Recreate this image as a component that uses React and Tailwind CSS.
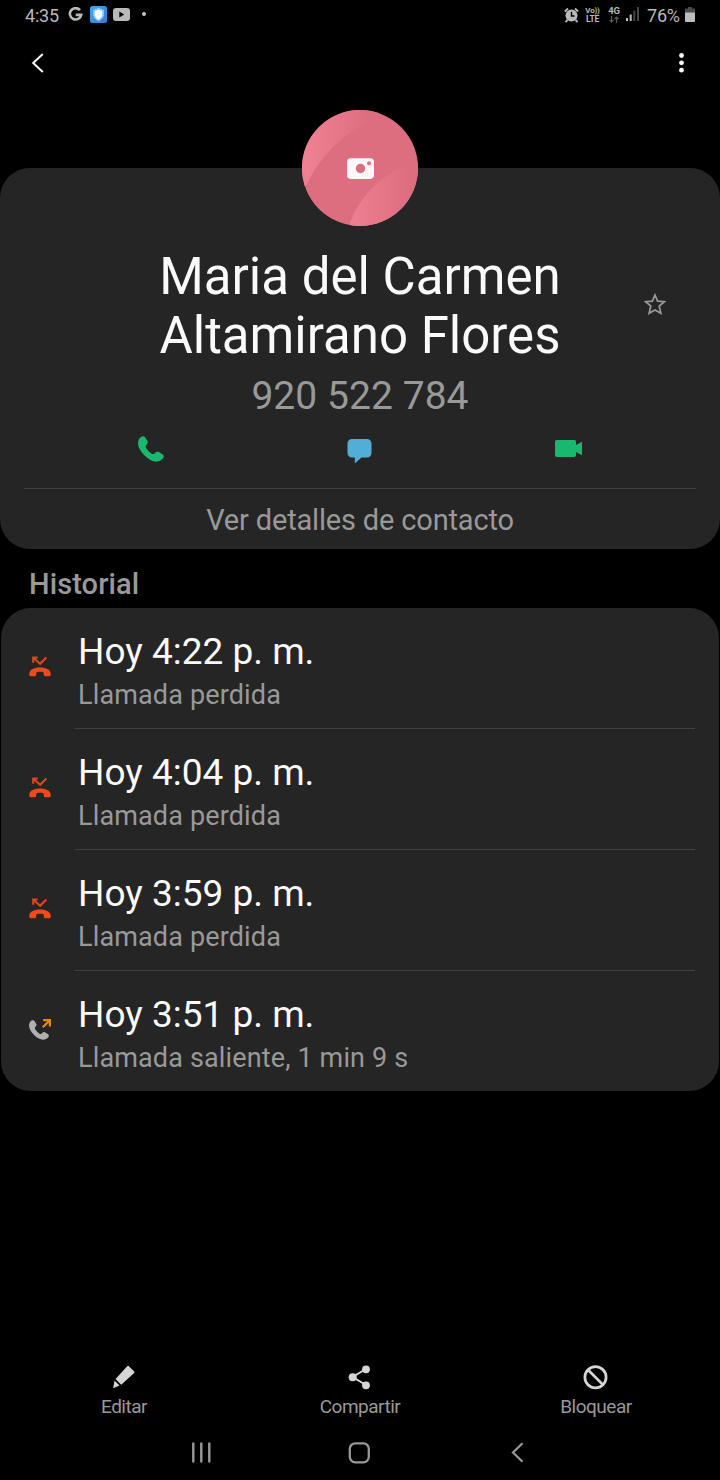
const calls = [
  { id: 1, time: 'Hoy 4:22 p. m.', detail: 'Llamada perdida', missed: true },
  { id: 2, time: 'Hoy 4:04 p. m.', detail: 'Llamada perdida', missed: true },
  { id: 3, time: 'Hoy 3:59 p. m.', detail: 'Llamada perdida', missed: true },
  { id: 4, time: 'Hoy 3:51 p. m.', detail: 'Llamada saliente, 1 min 9 s', missed: false },
];

function StatusBar() {
  return (
    <div className="flex h-[30px] items-center pl-[25px] pr-[25px] text-[#b9b9b9]">
      <span className="w-[34px] whitespace-nowrap text-[18px] leading-[21px] tracking-[-0.2px]">4:35</span>
      <svg className="ml-[9px] mb-[1px]" width="15" height="15" viewBox="0 0 15 15" fill="none" stroke="currentColor" strokeWidth="2.6">
        <path d="M12 3.2A5.7 5.7 0 1 0 13.2 7.9H7.7" />
      </svg>
      <svg className="ml-[7px] mb-[1px]" width="17" height="17" viewBox="0 0 17 17">
        <defs>
          <linearGradient id="shieldBg" x1="0" y1="0" x2="1" y2="1">
            <stop offset="0" stopColor="#45a4f2" />
            <stop offset="1" stopColor="#2b7fd2" />
          </linearGradient>
        </defs>
        <rect width="17" height="17" rx="2.5" fill="url(#shieldBg)" />
        <path d="M8.5 2.2 13.5 4v4.5c0 3-2 5-5 6.5-3-1.5-5-3.5-5-6.5V4z" fill="#8cc8f6" stroke="#a5d3f7" strokeDasharray="1.5 1" />
        <path d="M8.5 3.6 12.3 5v3.5c0 2.3-1.5 4-3.8 5.3-2.3-1.3-3.8-3-3.8-5.3V5z" fill="#f2f9fe" />
      </svg>
      <svg className="ml-[6px] mb-[1px]" width="17" height="13" viewBox="0 0 17 13">
        <rect width="17" height="13" rx="3" fill="currentColor" />
        <path d="M6.3 3.6v5.8l5-2.9z" fill="#000" />
      </svg>
      <span className="ml-[12px] mb-[2px] h-[4px] w-[4px] rounded-full bg-[#c4c4c4]" />

      <svg className="ml-auto mb-[1px]" width="15" height="16" viewBox="0 0 15 16" fill="none" stroke="currentColor">
        <circle cx="7.5" cy="8.4" r="6" fill="currentColor" stroke="none" />
        <path d="M.8 4.5 4 1.5M14.2 4.5 11 1.5M3.5 12.8 1.5 15.2M11.5 12.8l2 2.4" strokeWidth="1.8" />
        <path d="M7.5 4.8v4.2h3" stroke="#000" strokeWidth="1.4" />
      </svg>
      <span className="ml-[6px] mb-[1px] flex w-[15px] flex-col items-center whitespace-nowrap text-[8px] font-bold leading-[9px] tracking-[-0.2px]">
        <span>Vo))</span>
        <span className="text-[8.5px] tracking-[-0.3px]">LTE</span>
      </span>
      <span className="ml-[8px] mb-[1px] flex w-[12px] flex-col items-center text-[9.5px] font-bold leading-[8px] tracking-[-0.3px]">
        <span>4G</span>
        <svg className="mt-[1px]" width="10" height="7" viewBox="0 0 10 7" fill="none" stroke="#5c5c5c" strokeWidth="1.2">
          <path d="M2.5 0v6M.5 4l2 2 2-2M7.5 7V1M5.5 3l2-2 2 2" />
        </svg>
      </span>
      <svg className="ml-[6px] mb-[2px]" width="13" height="14" viewBox="0 0 13 14">
        <path d="M0 11h2v3H0zM3.7 7.5h2V14h-2z" fill="#bdbdbd" />
        <path d="M7.3 3.5h2V14h-2zM11 0h2v14h-2z" fill="#454545" />
      </svg>
      <span className="ml-[8px] w-[33px] whitespace-nowrap text-[18px] leading-[21px] tracking-[-0.2px]">76%</span>
      <svg className="ml-[5px] mb-[1px]" width="10" height="15" viewBox="0 0 10 15">
        <path d="M3 0h4v1.5h3V6H0V1.5h3z" fill="#4a4a4a" />
        <path d="M0 5.5h10V14a1 1 0 0 1-1 1H1a1 1 0 0 1-1-1z" fill="#bdbdbd" />
      </svg>
    </div>
  );
}

function Avatar() {
  return (
    <svg className="mx-auto block" width="116" height="116" viewBox="0 0 116 116">
      <defs>
        <clipPath id="avatarClip">
          <circle cx="58" cy="58" r="58" />
        </clipPath>
        <linearGradient id="arcTop" x1="0" y1="0" x2="1" y2="0">
          <stop offset="0" stopColor="#f08295" />
          <stop offset="0.85" stopColor="#dd6e7f" />
        </linearGradient>
        <linearGradient id="arcBottom" x1="0" y1="0" x2="1" y2="0">
          <stop offset="0" stopColor="#ee8093" />
          <stop offset="0.9" stopColor="#dd6e7f" />
        </linearGradient>
      </defs>
      <g clipPath="url(#avatarClip)">
        <rect width="116" height="116" fill="#dd6e7f" />
        <path d="M0 0h78v7C45 20 20 42 4 76H0z" fill="url(#arcTop)" />
        <path d="M116 52C82 61 58 84 47 116h69z" fill="url(#arcBottom)" />
      </g>
      <rect x="45" y="48.3" width="27" height="20.6" rx="3.8" fill="#fcf8f9" />
      <circle cx="58.5" cy="58.5" r="4.7" fill="#dd6e7f" />
      <circle cx="67" cy="53.2" r="2" fill="#dd6e7f" />
    </svg>
  );
}

function Handset({ size, color }) {
  return (
    <svg width={size} height={size} viewBox="0 0 26 26" fill={color}>
      <path d="M3.2.8C4.7-.2 6.3 0 7.3 1.5l2 3.3c.8 1.3.6 2.3-.4 3.4C7.3 9.7 7.2 10.8 8.5 12.6c1.3 1.9 2.9 3.5 4.7 4.8 1.5 1 2.6.9 3.7-.2 1.2-1.4 2.8-1.9 4.3-1l3.2 2c1.5 1 1.9 2.5.9 3.9-3 4-8.1 4.6-12.5 2.1C8.2 21.5 4 17.3 1.6 12.9-.8 8.6-.5 3.4 3.2.8z" />
    </svg>
  );
}

function CallIcon({ missed }) {
  if (missed) {
    return (
      <svg className="shrink-0" width="22" height="21" viewBox="0 0 22 21">
        <path d="M3.2 1.5h5.5M4.2.6v6.2M4.4 1.7l6.7 6.1 6.3-6.3" fill="none" stroke="#dc4620" strokeWidth="2.1" />
        <path d="M.2 18.5C.2 13.5 4.8 11.5 11 11.5s10.800 2 10.800 7c0 1.200-.5 1.700-1.600 1.700h-3.800c-1.200 0-1.600-.6-1.600-1.600v-1.300c-.2-1.200-1.300-1.500-3.800-1.500s-3.600.3-3.800 1.500v1.300c0 1-.4 1.600-1.600 1.600H1.800c-1.100 0-1.600-.5-1.600-1.700z" fill="#f04a1c" />
      </svg>
    );
  }
  return (
    <div className="relative h-[21px] w-[22px] shrink-0 pt-[1px]">
      <Handset size={20} color="#b0b0b0" />
      <svg className="absolute right-0 top-0" width="9" height="9" viewBox="0 0 9 9" fill="none" stroke="#ec8613" strokeWidth="2.2">
        <path d="M1.2 1.1h6.7v6.5M7.8 1.2.8 8.2" />
      </svg>
    </div>
  );
}

function CallRow({ call, last }) {
  return (
    <div className="flex h-[121px] items-center pl-[27.5px] pr-[24px]">
      <div className="-mt-[4px] w-[22px]">
        <CallIcon missed={call.missed} />
      </div>
      <div className={`ml-[24.5px] h-full flex-1 border-b pl-[3px] pt-[22px] ${last ? 'border-transparent' : 'border-[#404040]'}`}>
        <p className="whitespace-nowrap text-[37px] leading-[44px] text-[#fafafa]">{call.time}</p>
        <p className="mt-[5px] whitespace-nowrap text-[27px] leading-[32px] tracking-[0.14px] text-[#999]">{call.detail}</p>
      </div>
    </div>
  );
}

function BottomAction({ label, children }) {
  return (
    <button className="flex flex-col items-center">
      <svg width="26" height="26" viewBox="0 0 26 26">
        {children}
      </svg>
      <span className="mt-[6px] text-[19px] leading-[22px] tracking-[-0.5px] text-[#999]">{label}</span>
    </button>
  );
}

export default function App() {
  return (
    <div className="flex h-[1480px] w-[720px] flex-col overflow-hidden bg-black font-[Roboto,sans-serif]">
      <StatusBar />
      <header className="flex h-[65px] items-center justify-between pl-[31px] pr-[36px]">
        <svg width="13" height="20" viewBox="0 0 13 20" fill="none" stroke="#fafafa" strokeWidth="2">
          <path d="M11.8 1 2.2 10l9.6 9" />
        </svg>
        <svg width="6" height="20" viewBox="0 0 6 20" fill="#fafafa">
          <circle cx="3.5" cy="2.5" r="2.4" />
          <circle cx="3.5" cy="9.8" r="2.4" />
          <circle cx="3.5" cy="17.2" r="2.4" />
        </svg>
      </header>

      <section className="mt-[73px] h-[381px] rounded-[30px] bg-[#252525]">
        <div className="-mt-[58px]">
          <Avatar />
        </div>
        <div className="mt-[21px] grid grid-cols-[130px_460px_130px] items-center">
          <span />
          <h1 className="text-center text-[51px] leading-[59px] text-[#fafafa]">
            <span className="block whitespace-nowrap">Maria del Carmen</span>
            <span className="block whitespace-nowrap">Altamirano Flores</span>
          </h1>
          <svg className="-mt-[4px] ml-[54px]" width="22" height="22" viewBox="0 0 22 22" fill="none" stroke="#9a9a9a" strokeWidth="1.7">
            <path d="m11 2 2.6 6.2 6.7.5-5.1 4.3 1.7 7.2L11 16.9l-5.9 3.3 1.7-7.2L1.7 8.7l6.700-.5z" />
          </svg>
        </div>
        <p className="mt-[8px] text-center text-[39px] leading-[46px] tracking-[0.05px] text-[#999]">920 522 784</p>
        <div className="mt-[8px] grid h-[61px] grid-cols-[209px_209px_209px] justify-center justify-items-center pr-[2px]">
          <div className="mt-[9px] pl-[1px]">
            <Handset size={26} color="#18b86e" />
          </div>
          <svg className="mt-[12px]" width="25" height="25" viewBox="0 0 25 25" fill="#53aed6">
            <path d="M5 0h15a4.5 4.5 0 0 1 4.5 4.5V14a4.5 4.5 0 0 1-4.5 4.5h-5.5L7.8 24.5v-6H5A4.5 4.5 0 0 1 .5 14V4.5A4.5 4.5 0 0 1 5 0z" />
          </svg>
          <svg className="mt-[13px]" width="27" height="17" viewBox="0 0 27 17" fill="#18b86e">
            <path d="M1.8 0h17.4A1.8 1.8 0 0 1 21 1.8V5l6-3.2v13.4L21 12v3.2a1.8 1.8 0 0 1-1.8 1.8H1.8A1.8 1.8 0 0 1 0 15.2V1.8A1.8 1.8 0 0 1 1.8 0z" />
          </svg>
        </div>
        <div className="mx-[24px] border-t border-[#404040] pt-[14px] text-center text-[29px] leading-[34px] tracking-[-0.17px] text-[#999]">
          Ver detalles de contacto
        </div>
      </section>

      <h2 className="h-[59px] pl-[29px] pt-[18px] text-[29px] font-medium leading-[34px] tracking-[0.1px] text-[#999]">Historial</h2>

      <section className="mx-px h-[483px] rounded-[30px] bg-[#252525]">
        {calls.map((call, index) => (
          <CallRow key={call.id} call={call} last={index === calls.length - 1} />
        ))}
      </section>

      <div className="mt-auto grid grid-cols-[236px_236px_236px] justify-center">
        <BottomAction label="Editar">
          <path d="m17.6 2 5.3 5.3c.6.6.6 1.3 0 1.9L10.2 20.8 4.5 15.1 16 2.4c.5-.6 1-.9 1.6-.4zM3.5 16.4l5 5-6.3 2.8z" fill="#d6d6d6" />
        </BottomAction>
        <BottomAction label="Compartir">
          <path d="M19 5 5.5 13 19 21" stroke="#d6d6d6" strokeWidth="2" fill="none" />
          <circle cx="19" cy="5.3" r="3.9" fill="#d6d6d6" />
          <circle cx="5.7" cy="13.3" r="4" fill="#d6d6d6" />
          <circle cx="19" cy="21.3" r="3.9" fill="#d6d6d6" />
        </BottomAction>
        <BottomAction label="Bloquear">
          <circle cx="12.5" cy="13.3" r="10.6" stroke="#d6d6d6" strokeWidth="2.7" fill="none" />
          <path d="m5.2 6 14.6 14.6" stroke="#d6d6d6" strokeWidth="2.7" />
        </BottomAction>
      </div>

      <nav className="mt-[12px] flex h-[50px] items-start pl-[191px] pt-[12px]">
        <svg width="21" height="21" viewBox="0 0 21 21" stroke="#999" strokeWidth="2.4" strokeLinecap="round">
          <path d="M2.3 1.5v18M10.3 1.5v18M18.3 1.5v18" />
        </svg>
        <svg className="ml-[136px]" width="22" height="22" viewBox="0 0 22 22" fill="none" stroke="#999" strokeWidth="2.3">
          <rect x="1.8" y="1.3" width="19" height="19" rx="5.5" />
        </svg>
        <svg className="ml-[141px]" width="13" height="21" viewBox="0 0 13 21" fill="none" stroke="#999" strokeWidth="2.2">
          <path d="M11.5 1.2 2 10.5l9.5 9.3" />
        </svg>
      </nav>
    </div>
  );
}
